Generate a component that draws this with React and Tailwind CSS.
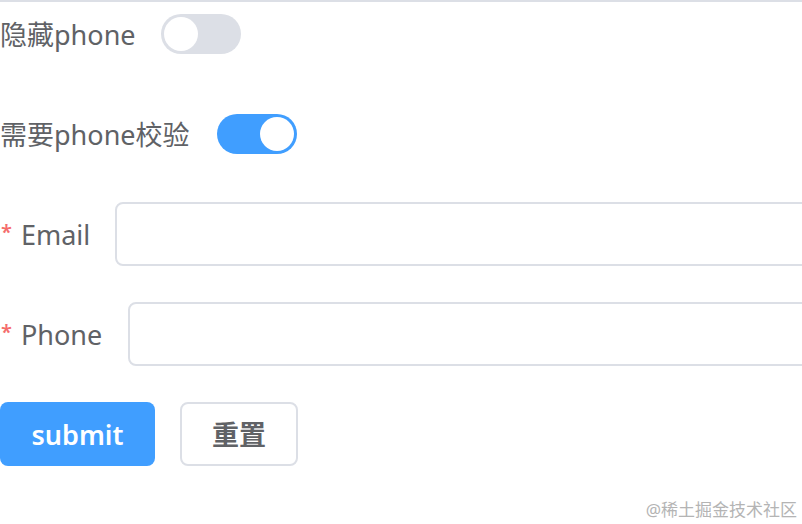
export default function App() {
  const font = { fontFamily: '"Noto Sans", "Noto Sans CJK SC", sans-serif' };
  return (
    <div className="relative w-[802px] h-[524px] overflow-hidden bg-white text-[#606266]" style={font}>
      <div className="h-[2px] bg-[#dcdfe6]" />
      <div className="flex flex-col gap-[36px] text-[27px]">
        <div className="flex items-center h-[64px]">
          <span className="leading-none">隐藏phone</span>
          <div className="ml-[25px] w-[80px] h-[40px] rounded-full bg-[#dcdfe6] flex items-center px-[3px]">
            <div className="w-[34px] h-[34px] rounded-full bg-white" />
          </div>
        </div>
        <div className="flex items-center h-[64px]">
          <span className="leading-none">需要phone校验</span>
          <div className="ml-[27px] w-[80px] h-[40px] rounded-full bg-[#409eff] flex items-center justify-end px-[3px]">
            <div className="w-[34px] h-[34px] rounded-full bg-white" />
          </div>
        </div>
        <div className="flex items-center h-[64px]">
          <span className="leading-none flex items-center">
            <span className="text-[#f56c6c] text-[20px] font-semibold ml-[1px] mr-[9px] -mt-[4px]">*</span>
            <span>Email</span>
          </span>
          <div className="ml-[25px] w-[720px] shrink-0 h-[64px] rounded-[8px] border-2 border-[#dcdfe6] bg-white" />
        </div>
        <div className="flex items-center h-[64px]">
          <span className="leading-none flex items-center">
            <span className="text-[#f56c6c] text-[20px] font-semibold ml-[1px] mr-[9px] -mt-[4px]">*</span>
            <span>Phone</span>
          </span>
          <div className="ml-[26px] w-[720px] shrink-0 h-[64px] rounded-[8px] border-2 border-[#dcdfe6] bg-white" />
        </div>
        <div className="flex items-center h-[64px] gap-[25px]">
          <button className="h-[64px] w-[155px] rounded-[8px] bg-[#409eff] text-white font-semibold text-[27px] leading-none">submit</button>
          <button className="h-[64px] w-[118px] rounded-[8px] border-2 border-[#dcdfe6] bg-white text-[#606266] font-semibold text-[27px] leading-none">重置</button>
        </div>
      </div>
      <div className="absolute right-[5px] bottom-[6px] text-[17px] leading-none text-[#b4b4b4]" style={font}>@稀土掘金技术社区</div>
    </div>
  );
}
